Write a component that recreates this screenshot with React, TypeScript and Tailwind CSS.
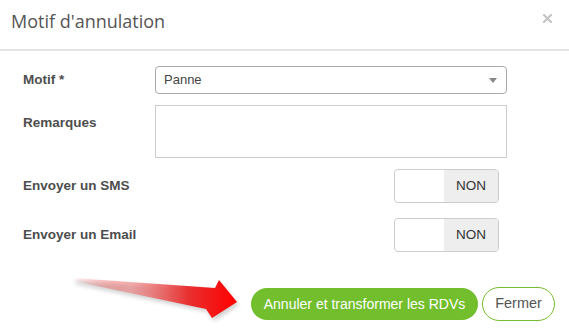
import React from "react";

function Toggle() {
  return (
    <div className="flex h-[34px] w-[105px] overflow-hidden rounded-[4px] border border-[#cccccc] bg-white">
      <div className="w-[49px]" />
      <div className="flex flex-1 items-center justify-center bg-[#eeeeee] text-[13.5px] text-[#333333]">NON</div>
    </div>
  );
}

export default function App() {
  return (
    <div className="h-[332px] w-[569px] bg-white font-['Liberation_Sans',Arial,sans-serif]">
      <div className="flex h-[51px] items-start justify-between border-b-2 border-[#e5e5e5] pl-[11px] pr-[17px]">
        <div className="mt-[9px] font-['Open_Sans',sans-serif] text-[18px] leading-[24px] text-[#555555]">Motif d'annulation</div>
        <svg className="mt-[14px]" width="9" height="9" viewBox="0 0 9 9">
          <path d="M1 1 L8 8 M8 1 L1 8" stroke="#c4c4c4" strokeWidth="2.2" strokeLinecap="square" />
        </svg>
      </div>
      <div className="relative flex flex-col pl-[23px] pt-[15px]">
        <div className="flex items-center">
          <div className="w-[132px] text-[13.5px] font-bold text-[#4d4d4d]">Motif *</div>
          <div className="flex h-[28px] w-[352px] items-center justify-between rounded-[4px] border border-[#aaaaaa] pl-[8px] pr-[9px] text-[13px] text-[#444444]">
            <span>Panne</span>
            <svg width="8" height="5" viewBox="0 0 8 5">
              <path d="M0 0 L8 0 L4 5 Z" fill="#888888" />
            </svg>
          </div>
        </div>
        <div className="mt-[11px] flex items-start">
          <div className="w-[132px] pt-[8px] text-[13.5px] font-bold text-[#4d4d4d]">Remarques</div>
          <div className="h-[53px] w-[352px] border border-[#cccccc]" />
        </div>
        <div className="mt-[11px] flex items-center">
          <div className="w-[371px] text-[13.5px] font-bold text-[#4d4d4d]">Envoyer un SMS</div>
          <Toggle />
        </div>
        <div className="mt-[15px] flex items-center">
          <div className="w-[371px] text-[13.5px] font-bold text-[#4d4d4d]">Envoyer un Email</div>
          <Toggle />
        </div>
        <div className="mt-[35px] flex items-center justify-end gap-[4px] pr-[14px]">
          <button className="flex h-[32px] w-[227px] items-center justify-center rounded-full bg-[#72be2d] text-[14px] text-white">
            Annuler et transformer les RDVs
          </button>
          <button className="flex h-[34px] w-[73px] items-center justify-center rounded-full border border-[#72be2d] bg-white text-[14.5px] text-[#555555]">
            Fermer
          </button>
        </div>
        <svg className="pointer-events-none absolute left-0 top-[215px]" width="250" height="50" viewBox="0 270 250 50" style={{ overflow: "visible" }}>
          <defs>
            <linearGradient id="ag" x1="73" y1="0" x2="237" y2="0" gradientUnits="userSpaceOnUse">
              <stop offset="0" stopColor="#ff0000" stopOpacity="0" />
              <stop offset="0.35" stopColor="#f08080" stopOpacity="0.6" />
              <stop offset="0.7" stopColor="#e83030" />
              <stop offset="1" stopColor="#ff0000" />
            </linearGradient>
            <filter id="sh" x="-20%" y="-50%" width="140%" height="200%">
              <feGaussianBlur stdDeviation="2" />
            </filter>
          </defs>
          <polygon points="75,285 217,294 221,287 239,309 214,325 208,316 75,288" fill="#000" opacity="0.18" filter="url(#sh)" />
          <polygon points="73,282 215,292 219,284 237,306 212,322 206,313 73,285" fill="url(#ag)" />
        </svg>
      </div>
    </div>
  );
}
